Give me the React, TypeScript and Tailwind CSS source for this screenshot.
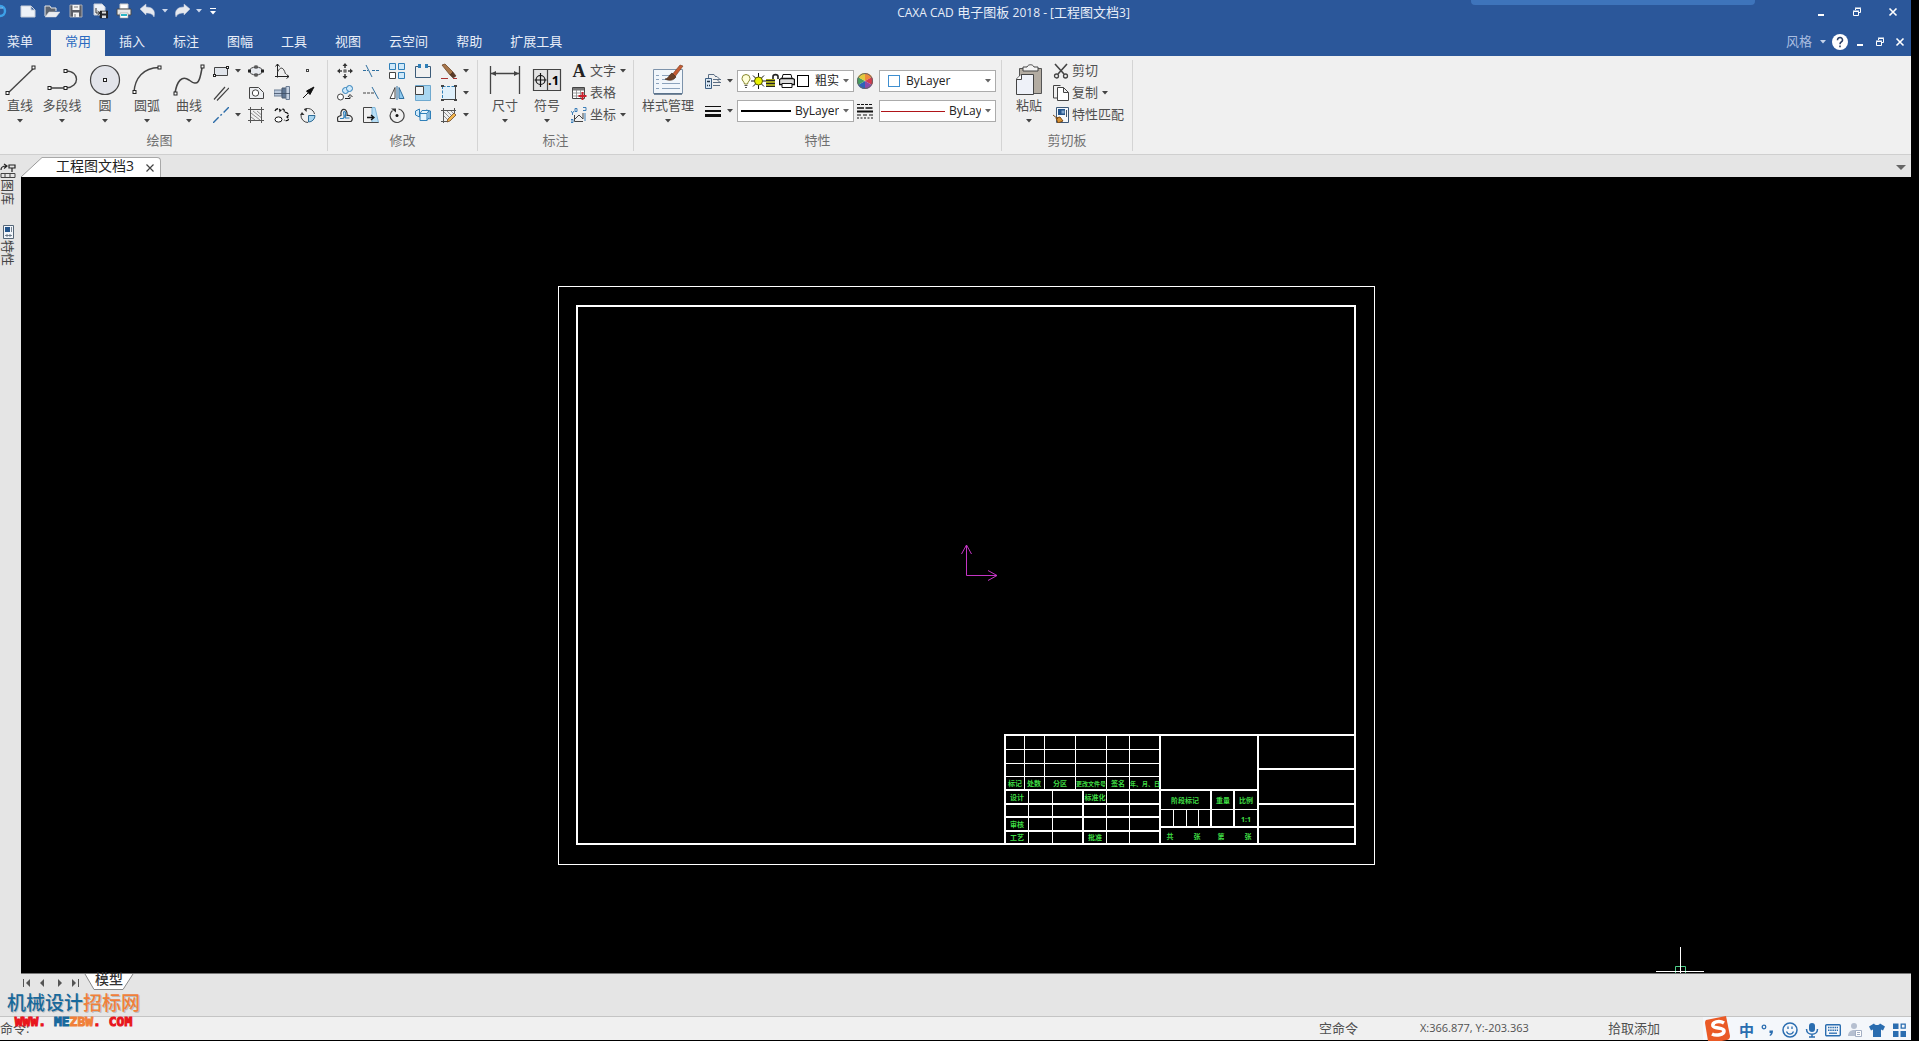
import type { ReactNode } from "react";

type IconProps = { children: ReactNode; size?: string; box?: string };

function Icon({ children, size = "size-4", box = "0 0 16 16" }: IconProps) {
  return (
    <svg viewBox={box} className={`${size} shrink-0`} fill="none" stroke="#444" aria-hidden="true">
      {children}
    </svg>
  );
}

function Caret({ color = "#444" }: { color?: string }) {
  return (
    <svg viewBox="0 0 6 4" className="h-1 w-1.5 shrink-0" aria-hidden="true">
      <path d="M0 0h6L3 3.6z" fill={color} />
    </svg>
  );
}

/* ---------- quick access bar ---------- */

const quickIcons: { name: string; icon: ReactNode }[] = [
  {
    name: "新建",
    icon: <path d="M1 3h10l4 4v7H1z M11 3v4h4" fill="#eef2f8" stroke="#c9cfd9" />,
  },
  {
    name: "打开",
    icon: (
      <>
        <path d="M1 13V3h5l1 2h5v3" fill="#5c6470" stroke="#e6e6e6" />
        <path d="M1 14l4-5h11l-4 5z" fill="#e9ecf1" stroke="#d9d9d9" strokeWidth=".5" />
      </>
    ),
  },
  {
    name: "保存",
    icon: (
      <>
        <path d="M2 2h12v12H2z" fill="#5b5e66" stroke="#a8abb3" />
        <path d="M4.500 2h7v5h-7z M5 9.500h6V14H5z" fill="#f4f4f4" stroke="none" />
        <path d="M6 4h4M7 11v3" stroke="#777" />
      </>
    ),
  },
  {
    name: "另存为",
    icon: (
      <>
        <path d="M2 1h8l3 3v8H2z" fill="#eef2f8" stroke="#c9cfd9" />
        <path d="M4 5v5h3M5.500 8L8 10l-2.500 2" stroke="#333" />
        <path d="M8 8h8v7H8z" fill="#26282d" stroke="#111" strokeWidth=".5" />
        <path d="M10 8.500h4v2h-4z M10 12.500h4V15h-4z" fill="#ddd" stroke="none" />
      </>
    ),
  },
  {
    name: "打印",
    icon: (
      <>
        <path d="M4 1h8v5H4z" fill="#fff" stroke="#ccc" />
        <path d="M1 6h14v6H1z" fill="#e8e8e8" stroke="#4a4a4a" />
        <path d="M4 10h8v5H4z" fill="#fff" stroke="#999" strokeWidth=".6" />
        <path d="M5 12h6" stroke="#29b6c5" strokeWidth="2" />
      </>
    ),
  },
];

function QuickAccess() {
  return (
    <div className="flex h-[22px] items-center">
      <div className="w-4 shrink-0">
        <svg viewBox="0 0 7 16" className="h-4 w-[7px]" fill="none" aria-hidden="true">
          <path d="M0 3c3 0 5 2 5 5s-2 5-5 5" stroke="#3da1e8" strokeWidth="2.400" />
          <path d="M0 5h3" stroke="#8fd2ff" />
        </svg>
      </div>
      {quickIcons.map((q) => (
        <button key={q.name} aria-label={q.name} className="flex w-6 justify-center">
          <Icon>{q.icon}</Icon>
        </button>
      ))}
      <button aria-label="撤销" className="flex items-center gap-1.5 pl-1">
        <Icon>
          <path d="M0 6l6-5v3c6 0 10 3 8 10-1-3-4-4-8-4v2z" fill="#e6e9ef" stroke="#c3cbdb" strokeWidth=".5" />
        </Icon>
        <Caret color="#cdd8ec" />
      </button>
      <button aria-label="重做" className="flex items-center gap-1.5 pl-1.5">
        <Icon>
          <path d="M16 6l-6-5v3C4 4 0 7 2 14c1-3 4-4 8-4v2z" fill="#e6e9ef" stroke="#c3cbdb" strokeWidth=".5" />
        </Icon>
        <Caret color="#cdd8ec" />
      </button>
      <button aria-label="自定义快速访问" className="flex flex-col items-center gap-0.5 pl-2">
        <span className="h-px w-1.5 bg-white" />
        <Caret color="#fff" />
      </button>
    </div>
  );
}

function WindowButtons({ spread }: { spread: boolean }) {
  return (
    <div className={spread ? "flex items-center gap-6 pr-3" : "flex items-center gap-2 pr-[5px]"}>
      <button aria-label="最小化" className="flex w-3 justify-center">
        <svg viewBox="0 0 12 12" className="size-3">
          <path d="M3 8h6v2H3z" fill="#fff" />
        </svg>
      </button>
      <button aria-label="还原" className="flex w-3 justify-center">
        <svg viewBox="0 0 12 12" className="size-3" fill="none" stroke="#fff">
          <path d="M4.500 4V2.500h5v4H8M4 2h6" />
          <path d="M2.500 5.500h5v4h-5zM2 5h6" />
        </svg>
      </button>
      <button aria-label="关闭" className="flex w-3 justify-center">
        <svg viewBox="0 0 12 12" className="size-3" fill="none" stroke="#fff" strokeWidth="1.600">
          <path d="M2.500 2.500l7 7M9.500 2.500l-7 7" />
        </svg>
      </button>
    </div>
  );
}

const tabs = ["常用", "插入", "标注", "图幅", "工具", "视图", "云空间", "帮助", "扩展工具"];

function Header() {
  return (
    <header className="relative bg-[#2b579a] text-[13px] text-[#e8eef8]">
      <div className="absolute top-0 right-[156px] h-[5px] w-[284px] rounded-b bg-[#3e74bb]" />
      <div className="grid h-[30px] grid-cols-[1fr_auto_1fr] items-start">
        <QuickAccess />
        <h1 className="pl-[116px] text-[13px] leading-6">
          <span className="text-xs">CAXA CAD</span> 电子图板 <span className="text-xs">2018 - [</span>
          工程图文档<span className="text-xs">3]</span>
        </h1>
        <div className="flex h-6 items-center justify-end">
          <WindowButtons spread />
        </div>
      </div>
      <nav className="flex h-[26px] items-center">
        <button className="h-full pr-[18px] pb-0.5 pl-[7px]">菜单</button>
        {tabs.map((t, i) => (
          <button
            key={t}
            className={i === 0 ? "h-full bg-[#f0f0f0] px-[14px] pb-0.5 text-[#2a6ac0]" : "h-full px-[14px] pb-0.5"}
          >
            {t}
          </button>
        ))}
        <div className="ml-auto flex items-center pb-0.5">
          <button className="flex items-center gap-2 text-[#a9bde0]">
            风格 <Caret color="#c5d3ea" />
          </button>
          <button aria-label="帮助" className="mx-1.5">
            <Icon>
              <circle cx="8" cy="8" r="8" fill="#fff" stroke="none" />
              <path d="M5.500 6.200c0-3.600 5.200-3.400 5 0C10.400 8 8 8 8 10.200M8 11.500v1.800" stroke="#2b3f66" strokeWidth="1.600" />
            </Icon>
          </button>
          <WindowButtons spread={false} />
        </div>
      </nav>
    </header>
  );
}

/* ---------- ribbon ---------- */

function Group({ title, width, children }: { title: string; width: string; children: ReactNode }) {
  return (
    <section className={`flex shrink-0 flex-col border-r border-[#d4d4d4] ${width}`}>
      <div className="flex h-[71px] items-start">{children}</div>
      <h2 className="h-5 text-center text-[13px] leading-[18px] text-[#707070]">{title}</h2>
    </section>
  );
}

function BigButton({ label, width = "w-[42px]", children }: { label: string; width?: string; children: ReactNode }) {
  return (
    <button className={`flex shrink-0 flex-col items-center pt-1 ${width}`}>
      <Icon size="size-8" box="0 0 32 32">
        {children}
      </Icon>
      <span className="mb-[3px] h-5 text-[13px] leading-[18px] whitespace-nowrap text-[#505050]">{label}</span>
      <Caret />
    </button>
  );
}

function Handle({ x, y, s = 4 }: { x: number; y: number; s?: number }) {
  return <rect x={x - s / 2} y={y - s / 2} width={s} height={s} fill="#fff" stroke="#222" />;
}

type Tool = { name: string; icon: ReactNode; menu?: boolean };

const drawTools: Tool[] = [
  {
    name: "矩形",
    menu: true,
    icon: (
      <>
        <path d="M1.500 4.500h13v8h-13z" fill="#e0e4ea" />
        <Handle x={1.5} y={12.5} s={2} />
        <Handle x={14.5} y={4.5} s={2} />
      </>
    ),
  },
  {
    name: "椭圆",
    icon: (
      <>
        <ellipse cx="8" cy="8" rx="6.500" ry="4" fill="#e6e9ee" />
        <Handle x={1.5} y={8} s={2} />
        <Handle x={14.5} y={8} s={2} />
        <Handle x={8} y={4} s={2} />
        <Handle x={8} y={12} s={2} />
      </>
    ),
  },
  {
    name: "公式曲线",
    icon: (
      <>
        <path d="M3.500 1v13.500M1 13.500h14M1.500 3.500l2-2.500 2 2.500M12.500 11.500l2.500 2-2.500 2" stroke="#222" />
        <path d="M3.500 9c3-6 6-5 8 2" stroke="#444" />
      </>
    ),
  },
  { name: "点", icon: <rect x="6.500" y="6.500" width="2" height="2" fill="#fff" /> },
  { name: "平行线", icon: <path d="M1 14.500L12 2M4 15.500L16 3" strokeWidth="1.200" /> },
  {
    name: "孔",
    icon: (
      <>
        <path d="M1.500 13.500v-11h9l5 5v6z" fill="#eceef1" />
        <circle cx="7.500" cy="8" r="3.200" fill="#fff" />
      </>
    ),
  },
  {
    name: "轴",
    icon: (
      <>
        <path d="M0 5h8v6H0z" fill="#b9c8dc" stroke="#6b7c93" />
        <path d="M8 3h4v10H8z" fill="#5f7694" stroke="#4a5a70" />
        <path d="M12 1.500h3.500v13H12z" fill="#c6d2e2" stroke="#6b7c93" />
        <path d="M0 8.500h16" stroke="#3d4d63" strokeWidth=".8" />
      </>
    ),
  },
  { name: "箭头", icon: <path d="M3 13l5-5M14 2L6.500 6l3.500 3.500z" fill="#111" stroke="#111" /> },
  { name: "中心线", menu: true, icon: <path d="M0 16L16 0" stroke="#2c6ca8" strokeWidth="1.400" strokeDasharray="8 2.500 2 2.500" /> },
  {
    name: "剖面线",
    icon: (
      <>
        <path d="M0 2.500h16M0 13.500h16M2.500 0v16M13.500 0v16" stroke="#555" />
        <path d="M3 10l4 3M3 6l9 7M5 4l8 6.500M9 4l4 3.500" stroke="#777" strokeWidth=".8" />
      </>
    ),
  },
  {
    name: "波浪线",
    icon: (
      <>
        <path d="M1 4c1-3 5-3 5 0 3-3 5-2 4 1 4 0 6 3 3 5 3 2 1 5-3 3" stroke="#111" strokeDasharray="4 1" strokeWidth="1.300" />
        <ellipse cx="4.500" cy="12.500" rx="3.500" ry="2.600" stroke="#111" fill="#fff" />
      </>
    ),
  },
  {
    name: "局部放大",
    icon: (
      <>
        <path d="M8 15.500A7 7 0 0 1 1 8M4 2.500A7 7 0 0 1 14.500 7" />
        <path d="M8.500 8.500H15a6.500 6.500 0 0 1-6.500 6.500z" fill="#a9d5ef" stroke="#2f6c96" />
        <path d="M0 8l2-3 2.500 3zM7 1l-3 1.500L6.500 5z" fill="#333" stroke="none" />
      </>
    ),
  },
];

const editTools: Tool[] = [
  {
    name: "平移",
    icon: (
      <>
        <path d="M8 2v3M8 11v3M2 8h3M11 8h3" strokeWidth="1.600" />
        <path d="M8 0l2.500 3h-5zM8 16l2.500-3h-5zM0 8l3-2.500v5zM16 8l-3-2.500v5z" fill="#333" stroke="none" />
        <rect x="7" y="7" width="2" height="2" />
      </>
    ),
  },
  {
    name: "裁剪",
    icon: (
      <>
        <path d="M0 7.500h5M9 7.500h7" stroke="#2f6f9f" strokeDasharray="3 1" />
        <path d="M3 2l6 12" stroke="#2f6f9f" />
      </>
    ),
  },
  {
    name: "阵列",
    icon: (
      <>
        <path d="M.5.500h6v6h-6zM9.500.500h6v6h-6zM9.500 9.500h6v6h-6z" fill="#cfe9fa" stroke="#2f7fb8" />
        <path d="M.5 9.500h6v6h-6z" fill="#fff" />
      </>
    ),
  },
  {
    name: "打断",
    icon: (
      <>
        <path d="M4 3.500H.500v11h15v-11H12" stroke="#3c5b78" />
        <path d="M3 1h3v4H3zM10 1h3v4h-3z" fill="#2f7fb8" stroke="none" />
      </>
    ),
  },
  {
    name: "删除",
    menu: true,
    icon: (
      <>
        <path d="M1 2l3-1 8 8-3 3z" fill="#a8764a" stroke="#6e4728" strokeWidth=".8" />
        <path d="M9 12l3-3 3 4-3 2z" fill="#5a3b28" stroke="#3b2414" strokeWidth=".5" />
        <path d="M0 15.500h7M12 15.500h4" stroke="#a33" />
      </>
    ),
  },
  {
    name: "平移复制",
    icon: (
      <>
        <circle cx="3.500" cy="12" r="3" fill="#fff" />
        <circle cx="8.500" cy="5.500" r="3" fill="#cfe9fa" stroke="#2f7fb8" />
        <circle cx="12.500" cy="3.500" r="3" fill="#cfe9fa" stroke="#2f7fb8" />
        <path d="M8 13.500h5v-2M11 12l2-2.500 2.500 2.500" stroke="#222" />
      </>
    ),
  },
  {
    name: "延伸",
    icon: (
      <>
        <path d="M0 8h11" stroke="#444" strokeDasharray="3 1" />
        <path d="M9 2l6.500 12" stroke="#2f6f9f" />
      </>
    ),
  },
  {
    name: "镜像",
    icon: (
      <>
        <path d="M6 2.500v11H1z" fill="#fff" />
        <path d="M10 2.500v11h5z" fill="#8fcaf0" stroke="#2f6f9f" />
        <path d="M8 1v14" stroke="#2f6f9f" />
      </>
    ),
  },
  {
    name: "缩放",
    icon: (
      <>
        <path d="M.5.500h15v15H.500z" fill="#a9d7f2" stroke="#6fa9cf" />
        <path d="M.5 1.500h8v8h-8z" fill="#f4f4f4" />
      </>
    ),
  },
  {
    name: "拉伸",
    menu: true,
    icon: (
      <>
        <path d="M1.500 1.500h13v13h-13z" fill="#dff0fb" stroke="#2f7fb8" strokeDasharray="3 1.500" />
        <path d="M14.500 1.500v13h-13" stroke="#444" />
        <path d="M0 0h3v2H0zM0 14h3v2H0zM13 14h3v2h-3zM13 0h3v2h-3z" fill="#444" stroke="none" />
      </>
    ),
  },
  {
    name: "等距线",
    icon: (
      <>
        <path d="M1 14.500h13c3-3 0-7-4-6 1-8-7-8-6-1 1 2-4 1-3.500 4 0 1 0 2 .5 3z" stroke="#333" strokeWidth="1.200" />
        <path d="M3 11.500h3c3-1-1-7 1.500-7s0 6 1 6.500h4" stroke="#2f7fb8" strokeWidth="1.200" />
      </>
    ),
  },
  {
    name: "过渡",
    icon: (
      <>
        <path d="M9 .500l3 0 3.500 15H9z" fill="#b8def5" stroke="#7fb6da" />
        <path d="M9 .500H.500v15H15.500" />
        <path d="M4 10.500h6M8 8l3 2.500L8 13" stroke="#111" strokeWidth="1.300" />
      </>
    ),
  },
  {
    name: "旋转",
    icon: (
      <>
        <path d="M3.500 3.500a7 6.800 0 1 0 6-1.500" strokeWidth="1.200" />
        <path d="M2 1.500h5v4z" fill="#333" stroke="none" />
        <circle cx="8" cy="8.500" r="1.500" fill="#111" stroke="none" />
      </>
    ),
  },
  {
    name: "块",
    icon: (
      <>
        <path d="M.5 4l4-2v8l-4-2zM11 3l4.500 1v8l-4-1z" fill="#cfe9fa" stroke="#2f7fb8" />
        <path d="M5 6.500h7v7H5zM5 6.500l2-3h7l-2 3M12 13.500l2-2.500V4" fill="#e5f4fd" stroke="#2f7fb8" />
      </>
    ),
  },
  {
    name: "填充编辑",
    menu: true,
    icon: (
      <>
        <path d="M0 3.500h15M2.500 1v15M0 14.500h7M13.500 1v5" stroke="#555" />
        <path d="M3 9l4 4M3 5l7 7M6 4l5 5M10 4l3 3" stroke="#777" strokeWidth=".8" />
        <path d="M6 15l1-3 6-6 2 2-6 6z" fill="#f2b64c" stroke="#6e4728" strokeWidth=".8" />
      </>
    ),
  },
];

function ToolButton({ tool }: { tool: Tool }) {
  return (
    <button aria-label={tool.name} className="flex h-[22px] items-center gap-1.5">
      <Icon>{tool.icon}</Icon>
      {tool.menu && <Caret />}
    </button>
  );
}

function LabelTool({ label, menu, children }: { label: string; menu?: boolean; children: ReactNode }) {
  return (
    <button className="flex h-[22px] items-center gap-[3px] text-[13px] whitespace-nowrap text-[#505050]">
      <Icon>{children}</Icon>
      <span>{label}</span>
      {menu && (
        <span className="flex pl-px">
          <Caret />
        </span>
      )}
    </button>
  );
}

function Combo({ label, options, children }: { label: string; options: string[]; children: ReactNode }) {
  return (
    <label className="flex h-[22px] w-[117px] items-center border border-[#ababab] bg-white pr-1 pl-[3px] text-[#222]">
      {children}
      <select aria-label={label} className="mr-1 ml-1 h-5 min-w-0 flex-1 appearance-none bg-transparent text-xs">
        {options.map((o) => (
          <option key={o}>{o}</option>
        ))}
      </select>
      <Caret color="#666" />
    </label>
  );
}

function Ribbon() {
  return (
    <div className="flex h-[99px] overflow-hidden border-b border-[#cfcfcf] bg-[#f0f0f0] pt-1 pb-[3px]">
      <Group title="绘图" width="w-[328px] pr-2">
        <BigButton label="直线" width="w-10">
          <path d="M3 30L30 4" strokeWidth="1.400" />
          <Handle x={3.5} y={29} s={3} />
          <Handle x={29.5} y={3.5} s={3} />
        </BigButton>
        <BigButton label="多段线" width="w-11">
          <path d="M3 24h17c14-1 14-17 0-17" strokeWidth="1.400" />
          <Handle x={3.5} y={24} s={3} />
          <Handle x={19.5} y={24} s={3} />
          <Handle x={19.5} y={7} s={3} />
        </BigButton>
        <BigButton label="圆">
          <circle cx="16" cy="16" r="14.500" fill="#e2e4ea" strokeWidth="1.200" />
          <Handle x={16} y={16} s={3} />
        </BigButton>
        <BigButton label="圆弧">
          <path d="M3 28C4 14 12 4 28 3.500" strokeWidth="1.400" />
          <Handle x={3.5} y={28} s={3} />
          <Handle x={28.5} y={3.5} s={3} />
        </BigButton>
        <BigButton label="曲线">
          <path d="M2 29c2-12 7-18 14-13 10 8 11-1 13-12" strokeWidth="1.600" />
          <Handle x={2.5} y={29.5} s={3} />
          <Handle x={29.5} y={2.5} s={3} />
        </BigButton>
        <div className="grid grid-cols-[25px_16px_16px_16px] gap-x-[10px] pl-[3px]">
          {drawTools.map((t) => (
            <ToolButton key={t.name} tool={t} />
          ))}
        </div>
      </Group>

      <Group title="修改" width="w-[150px]">
        <div className="grid grid-cols-[16px_16px_16px_16px_30px] gap-x-[10px] pl-[9px]">
          {editTools.map((t) => (
            <ToolButton key={t.name} tool={t} />
          ))}
        </div>
      </Group>

      <Group title="标注" width="w-[156px]">
        <div className="flex pl-1.5">
          <BigButton label="尺寸">
            <path d="M1.500 2v28M30.500 2v28M2 9.500h28" strokeWidth="1.300" />
            <path d="M2 9.500l5-2.500v5zM30 9.500L25 7v5z" fill="#444" stroke="none" />
          </BigButton>
          <BigButton label="符号">
            <path d="M2.500 5.500h27v21h-27zM16.500 5.500v21" fill="#e4e4e4" strokeWidth="1.200" />
            <circle cx="9.500" cy="16" r="4.500" stroke="#111" strokeWidth="1.200" />
            <path d="M9.500 9v14M3.500 16h12" stroke="#111" strokeWidth="1.200" />
            <text x="17" y="21" fontSize="13" fontWeight="700" fill="#000" stroke="none">
              .1
            </text>
          </BigButton>
        </div>
        <div className="pl-[3px]">
          <button className="flex h-[22px] items-center gap-[3px] text-[13px] whitespace-nowrap text-[#505050]">
            <span className="w-4 text-center font-['Liberation_Serif',serif] text-lg leading-5 font-bold text-[#222]">A</span>
            <span>文字</span>
            <span className="flex pl-px">
              <Caret />
            </span>
          </button>
          <LabelTool label="表格">
            <path d="M1.500 2.500h12v11h-12z" fill="#fff" />
            <path d="M2 3h11v2.500H2z" fill="#777" stroke="none" />
            <path d="M1.500 8h12M1.500 11h12M5.500 5v8M9.500 5v8" stroke="#888" strokeWidth=".8" />
            <path d="M11.500 7v8M7.500 11h8" stroke="#c8202c" strokeWidth="2" />
          </LabelTool>
          <LabelTool label="坐标" menu>
            <path d="M3.500 8v6.500H12M4 12l4-4 4 4V6" />
            <path d="M0 4l1.500 2L3 4M1.500 6v2M4 1.500h2v3H4zM12 .500h3v3h-3M0 12.500h2v3H0zM14 6v8" stroke="#3c7fb8" />
          </LabelTool>
        </div>
      </Group>

      <Group title="特性" width="w-[368px]">
        <BigButton label="样式管理" width="w-[68px]">
          <path d="M1.500 5.500h29v24h-29z" fill="#f1f6fb" stroke="#7d93ab" />
          <path
            d="M4 11.500h3M10 11.500h8M4 15.500h3M10 15.500h6M4 19.500h3M10 19.500h18M4 24.500h3M10 24.500h18"
            stroke="#7f98b4"
            strokeWidth=".9"
          />
          <path d="M2 30h28" stroke="#4f6780" strokeWidth="1.500" />
          <path d="M28 1l3 1-9 12-3-2z" fill="#c65b33" stroke="#6e3b20" strokeWidth=".6" />
          <path d="M20 9l4 4c-3 4-7 4-11 2 3 0 4-4 7-6z" fill="#6b4028" stroke="#3b2414" strokeWidth=".6" />
        </BigButton>
        <div className="flex flex-col gap-2 pt-[10px] pl-[3px] text-[13px]">
          <div className="flex h-[22px] items-center gap-2">
            <button aria-label="图层" className="flex w-6 items-center gap-1.5">
              <Icon>
                <path d="M3.500 6V1.500H9l1.500 2M10 3.500h2l3 3M8 6.500h8M12 6.500l3 3M8 9.500h8M8 12.500h7" stroke="#5c6f85" />
                <path d="M.5 5.500h6v10h-6z" fill="#dbe9f6" stroke="#3e5f82" />
                <path d="M2 8.500h3M2 12.500h1M4 12.500h1" stroke="#234" strokeWidth="1.400" />
              </Icon>
              <Caret />
            </button>
            <Combo label="当前图层" options={["粗实线层", "细实线层", "中心线层"]}>
              <Icon size="h-4 w-[10px]" box="0 0 10 16">
                <path d="M3.500 11C3 8 1 8 1 5.500a4 4 0 0 1 8 0C9 8 7 8 6.500 11z" fill="#ffffd8" stroke="#888830" />
                <path d="M3.500 12.500h3M4 14.500h2" stroke="#555" />
              </Icon>
              <Icon size="h-4 w-[15px]" box="0 0 15 16">
                <path d="M7.500 0v16M0 8h15M2 2.500l11 11M13 2.500l-11 11" stroke="#111" />
                <circle cx="7.500" cy="8" r="4" fill="#e8f000" stroke="#555500" />
              </Icon>
              <Icon size="h-4 w-[13px]" box="0 0 13 16">
                <path d="M7 8V3.500C7 1 12 1 12 3.500V6" stroke="#222" strokeWidth="1.600" />
                <path d="M0 6h9v8H0z" fill="#a5a51e" stroke="none" />
                <path d="M0 7.500h9M0 10.500h9M0 13.500h9" stroke="#222" />
              </Icon>
              <Icon>
                <path d="M4 1.500h8l1 4H3z" fill="#fff" stroke="#111" />
                <path d="M.5 6.500l2-1h11l2 1v5h-15z" fill="#ddd" stroke="#111" strokeWidth="1.300" />
                <path d="M3 10.500h10v4H3z" fill="#fff" stroke="#111" />
              </Icon>
              <span className="mr-0.5 ml-0.5 size-3 shrink-0 border border-black bg-white" />
            </Combo>
            <div className="-ml-[5px] flex items-center gap-1.5">
              <button aria-label="颜色">
                <Icon>
                  <path d="M8 8V0a8 8 0 0 1 7 4z" fill="#ef8a3c" stroke="none" />
                  <path d="M8 8l7-4a8 8 0 0 1 0 8z" fill="#d43b4d" stroke="none" />
                  <path d="M8 8l7 4a8 8 0 0 1-7 4z" fill="#8e4aa8" stroke="none" />
                  <path d="M8 8v8a8 8 0 0 1-7-4z" fill="#2f62b8" stroke="none" />
                  <path d="M8 8l-7 4a8 8 0 0 1 0-8z" fill="#45a060" stroke="none" />
                  <path d="M8 8L1 4a8 8 0 0 1 7-4z" fill="#e3c93e" stroke="none" />
                  <circle cx="8" cy="8" r="7.500" stroke="#666" />
                </Icon>
              </button>
              <Combo label="当前颜色" options={["ByLayer", "ByBlock"]}>
                <span className="mr-0.5 ml-[5px] size-3 shrink-0 border border-[#3f8fd0] bg-white" />
              </Combo>
            </div>
          </div>
          <div className="flex h-[22px] items-center gap-2">
            <button aria-label="线宽" className="flex w-6 items-center gap-1.5">
              <Icon>
                <path d="M0 3.500h16" stroke="#111" />
                <path d="M0 8h16" stroke="#111" strokeWidth="2" />
                <path d="M0 12.500h16" stroke="#111" strokeWidth="3" />
              </Icon>
              <Caret />
            </button>
            <Combo label="当前线宽" options={["ByLayer", "ByBlock"]}>
              <span className="h-0.5 w-[50px] shrink-0 bg-black" />
            </Combo>
            <div className="-ml-[5px] flex items-center gap-1.5">
              <button aria-label="线型">
                <Icon>
                  <path d="M0 1.500h16" stroke="#111" strokeDasharray="3 1" />
                  <path d="M0 5h16" stroke="#111" strokeWidth="1.500" strokeDasharray="7 1.500" />
                  <path d="M0 8.500h16" stroke="#111" strokeWidth="2" />
                  <path d="M0 12h16" stroke="#111" strokeDasharray="4 2" />
                  <path d="M0 15h16" stroke="#111" strokeDasharray="2 1.500" />
                </Icon>
              </button>
              <Combo label="当前线型" options={["ByLayer", "ByBlock"]}>
                <span className="-ml-0.5 h-px w-16 shrink-0 bg-[#b01418]" />
              </Combo>
            </div>
          </div>
        </div>
      </Group>

      <Group title="剪切板" width="w-[131px]">
        <div className="flex pl-1.5">
          <BigButton label="粘贴">
            <path d="M6.500 4.500h22v25h-22z" fill="#b3aca2" stroke="#555" />
            <path d="M10 7V3h4c1-3 6-3 7 0h4v4z" fill="#f3f3f3" stroke="#444" />
            <path d="M8 10.500h12.500v20h-17V15z" fill="#eef1f8" stroke="#444" />
            <path d="M8.500 10.500v5h-5" fill="#fff" stroke="#444" />
          </BigButton>
        </div>
        <div className="pl-[3px]">
          <LabelTool label="剪切">
            <path d="M2 1l9 10M14 1L5 11" strokeWidth="1.600" />
            <circle cx="3.500" cy="13" r="2" strokeWidth="1.300" />
            <circle cx="12.500" cy="13" r="2" strokeWidth="1.300" />
          </LabelTool>
          <LabelTool label="复制" menu>
            <path d="M4 13H.500V.500h7" />
            <path d="M4.500 2.500h6l5 5v8h-11zM10.500 2.500v5h5" fill="#fff" />
          </LabelTool>
          <LabelTool label="特性匹配">
            <path d="M3.500.500h12v15h-12z" fill="#f5f8fb" stroke="#3c5878" />
            <path d="M5 2h7v6H5z" fill="#24558c" stroke="none" />
            <path d="M8.500 3.500h3v3h-3z" fill="#7fa6cf" stroke="none" />
            <path d="M13.500 3v7" stroke="#456" />
            <path d="M0 8l5 4M3 11l4-1 3 4-5 2z" fill="#d49032" stroke="#7a4a18" />
          </LabelTool>
        </div>
      </Group>
    </div>
  );
}

/* ---------- drawing area ---------- */

// Title block text, relative to the block's upper left corner.
const blockTexts: [string, number, number][] = [
  ["标记", 10, 51],
  ["处数", 29, 51],
  ["分区", 55, 51],
  ["更改文件号", 86, 51],
  ["签名", 113, 51],
  ["年、月、日", 140, 51],
  ["设计", 12, 65],
  ["标准化", 90, 65],
  ["审核", 12, 92],
  ["工艺", 12, 105],
  ["批准", 90, 105],
  ["阶段标记", 180, 68],
  ["重量", 218, 68],
  ["比例", 241, 68],
  ["1:1", 241, 87],
  ["共", 165, 104],
  ["张", 192, 104],
  ["第", 216, 104],
  ["张", 243, 104],
];

function Drawing() {
  return (
    <svg viewBox="0 0 1890 796" className="block h-full w-full" fill="none" stroke="#fff" role="img" aria-label="工程图文档3">
      <rect x="537.500" y="109.500" width="816" height="578" />
      <rect x="556" y="129" width="778" height="538" strokeWidth="2" />

      <g transform="translate(984 558)">
        <path
          d="M350 0H0v109M155 0v109M253 0v109M0 55h253M0 69h155M0 82h155M0 96h155M78 55v54M155 92h195M206 55v37M229 55v37M253 34h97M253 69h97"
          strokeWidth="2"
        />
        <path d="M0 14.500h155M0 28.500h155M0 41.500h155M19.500 0v55M39.500 0v55M70.500 0v55M101.500 0v109M124.500 0v109M23.500 55v54M47.500 55v54M155 74.500h98M168.500 74v18M181.500 74v18M193.500 74v18" />
        <g fill="#3fdc44" stroke="none" fontSize="7" fontWeight="700" textAnchor="middle">
          {blockTexts.map(([t, x, y]) => (
            <text key={`${t}${x}`} x={x} y={y} fontSize={t.length > 4 ? 6 : 7}>
              {t}
            </text>
          ))}
        </g>
      </g>

      {/* coordinate system at the sheet centre */}
      <path d="M945.500 368v30.500H976M940.500 377l5-9 5 9M967 393.500l9 5-9 5" stroke="#c435c4" />

      {/* crosshair with pick box */}
      <path d="M1654.500 796v-6.500h10v6.500" stroke="#4fd08a" />
      <path d="M1659.500 770v26M1635 794.500h48" />
    </svg>
  );
}

function SideTabs() {
  return (
    <aside className="flex w-[21px] shrink-0 flex-col bg-[#e5e5e5] pt-2 text-[13px] leading-4 text-[#444]">
      <button className="flex flex-col items-center self-start">
        <Icon>
          <path d="M1 7c0-3 2-4 5-4M4 1l3 2-3 2.500M9 2h6v3H9zM12 5v4" stroke="#222" strokeWidth="1.200" />
          <path d="M1 10.500h14v4H1zM5 10v5M10 10v5" />
        </Icon>
        <span className="[text-orientation:sideways] [writing-mode:vertical-rl]">图库</span>
      </button>
      <button className="mt-[19px] flex flex-col items-center self-start">
        <Icon>
          <path d="M3.500 1.500h10v13h-10z" fill="#f2f6fb" stroke="#567" />
          <path d="M5 3h5v5H5z" fill="#24558c" stroke="none" />
          <path d="M11.500 3v5M5 11.500h7M7 10v3M10 10v3" stroke="#567" strokeWidth=".8" />
        </Icon>
        <span className="[text-orientation:sideways] [writing-mode:vertical-rl]">特性</span>
      </button>
    </aside>
  );
}

function DocumentTabs() {
  return (
    <div className="flex h-[22px] items-end bg-[#e5e5e5]">
      <svg viewBox="0 0 21 20" className="h-5 w-[21px]" aria-hidden="true">
        <path d="M0 20L21 0v20z" fill="#fff" />
        <path d="M0 20L21 .500" stroke="#999" />
      </svg>
      <div className="flex h-5 items-center rounded-tr-sm border-t border-r border-[#a8a8a8] bg-white pr-1.5 pl-[14px]">
        <button className="pb-[3px] text-sm leading-4 text-[#222]">工程图文档3</button>
        <button aria-label="关闭文档" className="ml-3">
          <svg viewBox="0 0 8 8" className="size-2" stroke="#444" strokeWidth="1.200">
            <path d="M.5.500l7 7M7.500.500l-7 7" />
          </svg>
        </button>
      </div>
      <button aria-label="文档列表" className="mr-[5px] mb-[7px] ml-auto">
        <svg viewBox="0 0 10 5" className="h-[5px] w-[10px]">
          <path d="M0 0h10L5 5z" fill="#666" />
        </svg>
      </button>
    </div>
  );
}

function SheetTabs() {
  return (
    <div className="flex h-[43px] items-start border-t border-[#777] bg-[#e5e5e5]">
      <div className="flex h-[18px] items-center gap-2 pr-[3px]">
        <button aria-label="第一页">
          <svg viewBox="0 0 9 8" className="h-2 w-[9px]" fill="#555">
            <path d="M2 0h1v8H2zM9 0v8L5 4z" />
          </svg>
        </button>
        <button aria-label="上一页">
          <svg viewBox="0 0 9 8" className="h-2 w-[9px]" fill="#555">
            <path d="M6 0v8L2 4z" />
          </svg>
        </button>
        <button aria-label="下一页">
          <svg viewBox="0 0 9 8" className="h-2 w-[9px]" fill="#555">
            <path d="M3 0v8l4-4z" />
          </svg>
        </button>
        <button aria-label="最后一页">
          <svg viewBox="0 0 9 8" className="h-2 w-[9px]" fill="#555">
            <path d="M0 0v8l4-4zM6 0h1v8H6z" />
          </svg>
        </button>
      </div>
      <button className="relative flex h-[17px] w-[50px] items-start justify-center text-sm leading-[10px] font-medium text-[#333]">
        <svg viewBox="0 0 50 17" className="absolute inset-0 h-full w-full" fill="#fff" stroke="#888" aria-hidden="true">
          <path d="M1 0l9 15.500h29L49 0" />
        </svg>
        <span className="relative">模型</span>
      </button>
    </div>
  );
}

function Watermark() {
  return (
    <div className="pointer-events-none absolute bottom-[9px] left-[7px] text-center">
      <p className="text-[19px] leading-5 font-medium text-[#17699c] [text-shadow:1px_1px_0_#bbb]">
        机械设计<span className="text-[#f0803a]">招标网</span>
      </p>
      <p className="font-['DejaVu_Sans_Mono','Liberation_Mono',monospace] text-[13px] leading-[18px] font-bold text-[#e8141c] [-webkit-text-stroke:1px]">
        WWW. <span className="text-[#17699c]">ME</span>
        <span className="text-[#f0803a]">ZBW</span>. COM
      </p>
    </div>
  );
}

/* ---------- status bar ---------- */

function InputMethodBar() {
  return (
    <div className="flex h-full w-[208px] items-center bg-[#f4f7fb] text-[#2a6db0]">
      <svg viewBox="0 0 28 28" className="-my-1 size-7 shrink-0" aria-hidden="true">
        <path d="M3 5l20-4 4 20q0 3-3 4L8 28q-2 0-3-2L2 8q0-2 1-3z" fill="#ea5a26" />
        <path d="M21 8c-5-3-12-1-11 3 1 3 11 1 11 5 0 4-8 5-12 3" fill="none" stroke="#fff" strokeWidth="3.600" />
      </svg>
      <div className="flex flex-1 items-center justify-between pt-0.5 pr-1 pl-2">
        <button className="text-[15px] leading-4 font-bold">中</button>
        <button aria-label="标点">
          <Icon>
            <circle cx="4" cy="5" r="1.800" stroke="#2a6db0" strokeWidth="1.300" />
            <path d="M9.500 8.500h3.500c0 3-1 4.500-3 5.500l-.500-1c1-.6 1.300-1.300 1.300-2H9.500z" fill="#2a6db0" stroke="none" />
          </Icon>
        </button>
        <button aria-label="表情">
          <Icon>
            <circle cx="8" cy="8" r="7" stroke="#2a6db0" strokeWidth="1.500" />
            <path d="M6 4.500v2.500M10 4.500v2.500M4.500 9.500c1.500 3.500 5.500 3.500 7 0" stroke="#2a6db0" strokeWidth="1.300" />
          </Icon>
        </button>
        <button aria-label="语音">
          <Icon>
            <rect x="5" y="1" width="6" height="9" rx="3" fill="#2a6db0" stroke="none" />
            <path d="M2.500 7c0 7 11 7 11 0M8 12v3.500M5 15h6" stroke="#2a6db0" strokeWidth="1.500" />
          </Icon>
        </button>
        <button aria-label="软键盘">
          <Icon>
            <rect x=".7" y="2.700" width="14.600" height="11" rx="1" stroke="#2a6db0" strokeWidth="1.400" />
            <path d="M3 5.500h10M3 8.200h10" stroke="#2a6db0" strokeWidth="1.400" strokeDasharray="1.500 .7" />
            <path d="M4 11.200h8" stroke="#2a6db0" strokeWidth="1.300" />
          </Icon>
        </button>
        <button aria-label="账户">
          <Icon>
            <circle cx="7" cy="4" r="3" fill="#b5bfd0" stroke="none" />
            <path d="M1 14c0-8 12-8 12 0z" fill="#b5bfd0" stroke="none" />
            <path d="M8.500 8.500h6v6h-6zM10 10.500h3M10 12.500h3" fill="#fff" stroke="#a3afc4" />
          </Icon>
        </button>
        <button aria-label="皮肤">
          <Icon>
            <path d="M5 1.500c1 2 5 2 6 0l5 3-2 4-2-1V15H4V7.500l-2 1-2-4z" fill="#2a6db0" stroke="none" />
          </Icon>
        </button>
        <button aria-label="工具箱">
          <Icon>
            <path d="M2 1.500h5.500V7H2zM2 9h5.500v6H2zM9.500 9H15v6H9.500z" fill="#2a6db0" stroke="none" />
            <path d="M10.200 2.200h4v4h-4z" stroke="#2a6db0" strokeWidth="1.300" />
          </Icon>
        </button>
      </div>
    </div>
  );
}

function StatusBar() {
  return (
    <footer className="flex h-[24px] items-center border-t border-[#c4c4c4] bg-[#f0f0f0] text-[13px] leading-5 text-[#505050]">
      <div className="flex min-w-0 flex-1 items-center pb-0.5">
        <label htmlFor="command">命令:</label>
        <input id="command" className="h-5 min-w-0 flex-1 bg-transparent px-1 outline-none" />
        <span className="w-[101px] shrink-0">空命令</span>
        <span className="w-[188px] shrink-0 text-[11px]">X:366.877, Y:-203.363</span>
        <span className="w-[95px] shrink-0">拾取添加</span>
      </div>
      <InputMethodBar />
    </footer>
  );
}

export default function App() {
  return (
    <div className="flex h-screen flex-col bg-black pr-2 pb-px font-['Open_Sans','Noto_Sans_CJK_SC',sans-serif]">
      <Header />
      <Ribbon />
      <div className="flex min-h-0 flex-1">
        <SideTabs />
        <main className="flex min-w-0 flex-1 flex-col">
          <DocumentTabs />
          <div className="min-h-0 flex-1">
            <Drawing />
          </div>
          <SheetTabs />
        </main>
      </div>
      <div className="relative">
        <StatusBar />
        <Watermark />
      </div>
    </div>
  );
}
